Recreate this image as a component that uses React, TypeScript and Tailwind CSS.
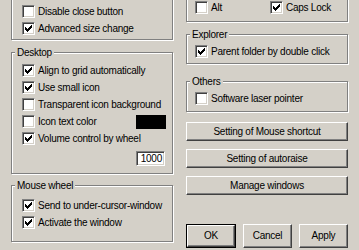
import React from "react";

function Check() {
  return (
    <svg width="7" height="7" viewBox="0 0 7 7" shapeRendering="crispEdges" className="block">
      <path
        d="M6 0h1v1h-1z M5 1h2v1h-2z M0 2h1v1h-1z M4 2h3v1h-3z M0 3h2v1h-2z M3 3h3v1h-3z M0 4h5v1h-5z M1 5h3v1h-3z M2 6h1v1h-1z"
        fill="#000"
      />
    </svg>
  );
}

function CheckBox({ checked }: { checked?: boolean }) {
  return (
    <span className="flex w-[13px] h-[13px] shrink-0 items-center justify-center bg-white border border-t-[#808080] border-l-[#808080] border-r-white border-b-white shadow-[inset_1px_1px_0_#404040,inset_-1px_-1px_0_#d4d0c8]">
      {checked && <Check />}
    </span>
  );
}

function Row({ checked, label, className = "" }: { checked?: boolean; label: string; className?: string }) {
  return (
    <div className={"flex items-center h-[17px] " + className}>
      <CheckBox checked={checked} />
      <span className="ml-[3px] whitespace-nowrap">{label}</span>
    </div>
  );
}

function Group({ label, className = "", children }: { label?: string; className?: string; children: React.ReactNode }) {
  return (
    <div className={"relative border border-[#808080] shadow-[inset_1px_1px_0_#ffffff,1px_1px_0_#ffffff] " + className}>
      {label && (
        <span className="absolute -top-[7px] left-[3px] px-[2px] bg-[#d4d0c8] leading-[13px] whitespace-nowrap">{label}</span>
      )}
      {children}
    </div>
  );
}

function Btn({ children, className = "" }: { children: React.ReactNode; className?: string }) {
  return (
    <div className={"flex items-center justify-center border border-t-white border-l-white border-r-[#404040] border-b-[#404040] shadow-[inset_-1px_-1px_0_#808080] whitespace-nowrap " + className}>
      {children}
    </div>
  );
}

export default function App() {
  return (
    <div className="w-[359px] h-[250px] overflow-hidden bg-[#d4d0c8] font-['Liberation_Sans',Arial,sans-serif] text-[10px] tracking-[-0.25px] text-black flex gap-[13px] pl-[11px] leading-none">
      {/* Left column */}
      <div className="w-[162px] shrink-0 flex flex-col -mt-[20px]">
        <Group className="pt-[22px] pb-[2px] pl-[10px]">
          <Row label="Disable close button" />
          <Row checked label="Advanced size change" />
        </Group>

        <Group label="Desktop" className="mt-[12px] pt-[9px] pb-[7px] pl-[10px] pr-[6px]">
          <Row checked label="Align to grid automatically" />
          <Row checked label="Use small icon" />
          <Row label="Transparent icon background" />
          <div className="flex items-center justify-between h-[17px]">
            <Row label="Icon text color" />
            <div className="w-[30px] h-[14px] bg-black" />
          </div>
          <Row checked label="Volume control by wheel" />
          <div className="flex justify-end mt-[4px]">
            <div className="w-[29px] h-[15px] mr-[1px] bg-white border border-t-[#808080] border-l-[#808080] border-r-white border-b-white shadow-[inset_1px_1px_0_#404040,inset_-1px_-1px_0_#d4d0c8] flex items-center justify-end pr-[2px]">
              1000
            </div>
          </div>
        </Group>

        <Group label="Mouse wheel" className="mt-[11px] pt-[11px] pb-[10px] pl-[10px]">
          <Row checked label="Send to under-cursor-window" />
          <Row checked label="Activate the window" />
        </Group>
      </div>

      {/* Right column */}
      <div className="w-[162px] shrink-0 flex flex-col -mt-[20px]">
        <Group className="pt-[18px] pb-[5px] pl-[8px]">
          <div className="flex">
            <Row label="Alt" className="w-[75px]" />
            <Row checked label="Caps Lock" />
          </div>
        </Group>

        <Group label="Explorer" className="mt-[12px] pt-[8px] pb-[3px] pl-[8px]">
          <Row checked label="Parent folder by double click" />
        </Group>

        <Group label="Others" className="mt-[17px] pt-[8px] pb-[4px] pl-[8px]">
          <Row label="Software laser pointer" />
        </Group>

        <Btn className="mt-[10px] h-[19px]">Setting of Mouse shortcut</Btn>
        <Btn className="mt-[8px] h-[19px]">Setting of autoraise</Btn>
        <Btn className="mt-[8px] h-[19px]">Manage windows</Btn>

        <div className="mt-[29px] flex justify-between h-[24px]">
          <div className="w-[50px] border border-black flex">
            <Btn className="flex-1">OK</Btn>
          </div>
          <Btn className="w-[49px]">Cancel</Btn>
          <Btn className="w-[49px]">Apply</Btn>
        </div>
      </div>
    </div>
  );
}
